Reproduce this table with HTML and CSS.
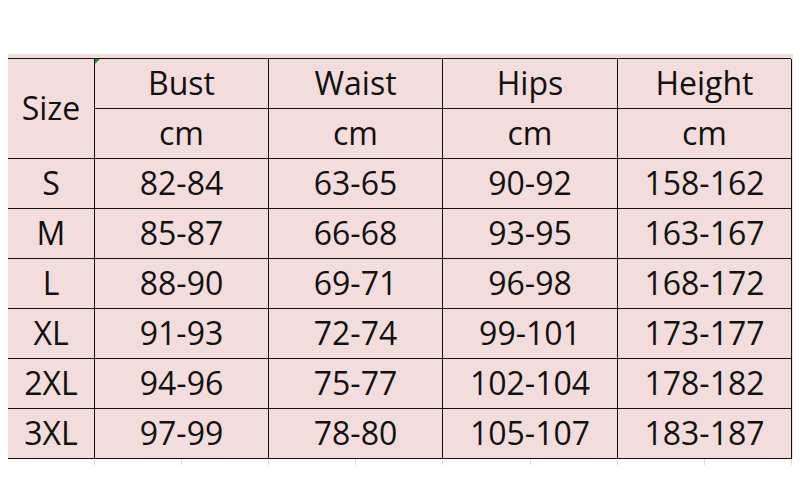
FILE: index.html
```html
<!DOCTYPE html>
<html>
<head>
<meta charset="utf-8">
<link rel="stylesheet" href="styles.css">
</head>
<body>
<div class="sheet">
  <div class="panel">
    <div class="grid">
      <div class="cell size">Size</div>
      <div class="cell flag">Bust</div>
      <div class="cell">Waist</div>
      <div class="cell">Hips</div>
      <div class="cell">Height</div>
      <div class="cell">cm</div>
      <div class="cell">cm</div>
      <div class="cell">cm</div>
      <div class="cell">cm</div>

      <div class="cell">S</div><div class="cell">82-84</div><div class="cell">63-65</div><div class="cell">90-92</div><div class="cell">158-162</div>
      <div class="cell">M</div><div class="cell">85-87</div><div class="cell">66-68</div><div class="cell">93-95</div><div class="cell">163-167</div>
      <div class="cell">L</div><div class="cell">88-90</div><div class="cell">69-71</div><div class="cell">96-98</div><div class="cell">168-172</div>
      <div class="cell">XL</div><div class="cell">91-93</div><div class="cell">72-74</div><div class="cell">99-101</div><div class="cell">173-177</div>
      <div class="cell">2XL</div><div class="cell">94-96</div><div class="cell">75-77</div><div class="cell">102-104</div><div class="cell">178-182</div>
      <div class="cell">3XL</div><div class="cell">97-99</div><div class="cell">78-80</div><div class="cell">105-107</div><div class="cell">183-187</div>
    </div>
  </div>
  <div class="ticks">
    <span></span><span></span><span></span><span></span><span></span><span></span><span></span><span></span><span></span>
  </div>
</div>
</body>
</html>
```

FILE: styles.css
```css
html, body {
  margin: 0;
  padding: 0;
  background: #ffffff;
}
.sheet {
  padding: 54px 0 0 8px;
  width: 785px;
}
.panel {
  background: #f2dddc;
  padding: 4px 2px 0 0;
}
.grid {
  display: grid;
  grid-template-columns: 87px 174px 174px 175px 174px;
  grid-auto-rows: 50px;
  border-top: 1px solid #111;
  font-family: "Open Sans", "Liberation Sans", sans-serif;
  font-size: 32px;
  color: #111;
}
.cell {
  box-sizing: border-box;
  border-bottom: 1px solid #111;
  border-right: 1px solid #111;
  display: flex;
  align-items: center;
  justify-content: center;
  line-height: 1;
  padding-bottom: 1px;
}
.size {
  grid-row: span 2;
}
.flag {
  position: relative;
}
.flag::before {
  content: "";
  position: absolute;
  left: 0;
  top: 0;
  width: 0;
  height: 0;
  border-top: 5px solid #2e8b2e;
  border-right: 5px solid transparent;
}
.ticks {
  display: grid;
  grid-template-columns: 87px 87px 87px 87px 87px 88px 87px 87px 87px;
  height: 6px;
}
.ticks span {
  border-right: 1px solid #dcdcdc;
}
```
